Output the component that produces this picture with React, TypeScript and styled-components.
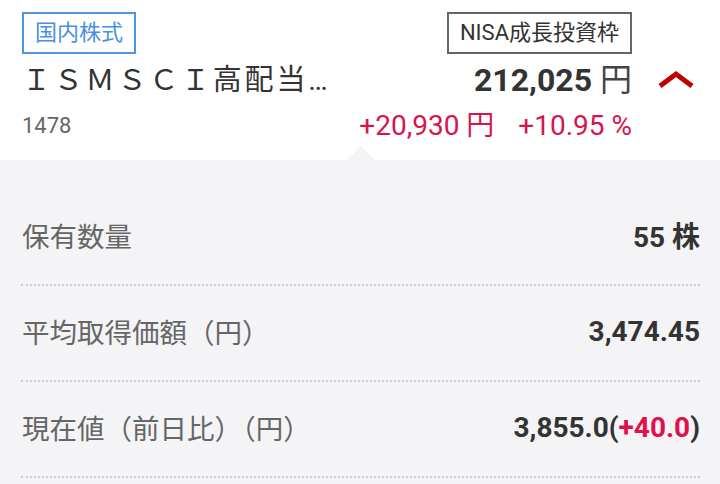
import React from "react";
import styled, { createGlobalStyle } from "styled-components";

const GlobalStyle = createGlobalStyle`
  html, body { margin: 0; padding: 0; background: #f4f4f6; }
  body { font-family: Roboto, "Noto Sans CJK JP", sans-serif; -webkit-font-smoothing: antialiased; }
`;

const Page = styled.div`
  min-height: 100vh;
  display: flex;
  flex-direction: column;
  overflow: hidden;
`;

const Header = styled.header`
  background: #ffffff;
  display: grid;
  grid-template-columns: 1fr auto 88px;
  grid-template-rows: 42px 52px 40px;
  padding: 12px 0 14px 22px;
`;

const Badge = styled.span<{ $tone: "blue" | "gray" }>`
  box-sizing: border-box;
  height: 42px;
  display: inline-flex;
  align-items: center;
  padding: 0 11px;
  border: 2px solid ${(p) => (p.$tone === "blue" ? "#4d95e3" : "#666666")};
  color: ${(p) => (p.$tone === "blue" ? "#4a90e0" : "#333333")};
  font-size: 22px;
  line-height: 38px;
  white-space: nowrap;
`;

const LeftCell = styled.div`
  display: flex;
  align-items: center;
  justify-content: flex-start;
  min-width: 0;
`;

const RightCell = styled.div`
  display: flex;
  align-items: center;
  justify-content: flex-end;
`;

const Title = styled.div`
  font-size: 29px;
  line-height: 52px;
  letter-spacing: 2.8px;
  color: #333333;
  white-space: nowrap;
  overflow: hidden;
`;

const Code = styled.div`
  font-size: 22px;
  line-height: 40px;
  color: #666666;
`;

const Price = styled.div`
  font-size: 32px;
  line-height: 52px;
  color: #333333;
  font-weight: 700;
  white-space: nowrap;
`;

const Unit = styled.span`
  font-weight: 400;
  color: #444444;
`;

const Change = styled.div`
  font-size: 28px;
  line-height: 40px;
  color: #d7144b;
  white-space: nowrap;
  display: flex;
  gap: 24px;
`;

const ChevronCell = styled.div`
  display: flex;
  align-items: center;
  justify-content: center;
  padding-bottom: 2px;
`;

const Body = styled.section`
  position: relative;
  flex: 1;
  background: #f4f4f6;
  padding: 30px 20px 0 21px;

  &::before {
    content: "";
    position: absolute;
    left: calc(50% - 13px);
    top: -14px;
    width: 0;
    height: 0;
    border-left: 14px solid transparent;
    border-right: 14px solid transparent;
    border-bottom: 14px solid #f4f4f6;
  }
`;

const Row = styled.div`
  box-sizing: border-box;
  height: 96px;
  display: flex;
  align-items: center;
  justify-content: space-between;
  padding-bottom: 4px;
  border-bottom: 2px dotted #cdcdcf;
`;

const Label = styled.div`
  font-size: 27.5px;
  color: #666666;
  padding-left: 1px;
`;

const Value = styled.div`
  font-size: 28px;
  font-weight: 700;
  color: #333333;
  white-space: nowrap;
`;

const Plus = styled.span`
  color: #e0114a;
`;

const Chevron = () => (
  <svg width="38" height="20" viewBox="0 0 38 20" aria-hidden="true">
    <polyline
      points="3,17 19,5 35,17"
      fill="none"
      stroke="#c00000"
      strokeWidth="5"
      strokeLinejoin="miter"
    />
  </svg>
);

const rows: { label: string; value: React.ReactNode }[] = [
  { label: "保有数量", value: "55 株" },
  { label: "平均取得価額（円）", value: "3,474.45" },
  {
    label: "現在値（前日比）（円）",
    value: (
      <>
        3,855.0(<Plus>+40.0</Plus>)
      </>
    ),
  },
];

export default function App() {
  return (
    <Page>
      <GlobalStyle />
      <Header>
        <LeftCell>
          <Badge $tone="blue">国内株式</Badge>
        </LeftCell>
        <RightCell>
          <Badge $tone="gray">NISA成長投資枠</Badge>
        </RightCell>
        <div />
        <LeftCell>
          <Title>ＩＳＭＳＣＩ高配当…</Title>
        </LeftCell>
        <RightCell>
          <Price>
            212,025 <Unit>円</Unit>
          </Price>
        </RightCell>
        <ChevronCell>
          <Chevron />
        </ChevronCell>
        <LeftCell>
          <Code>1478</Code>
        </LeftCell>
        <RightCell>
          <Change>
            <span>+20,930 円</span>
            <span>+10.95 %</span>
          </Change>
        </RightCell>
        <div />
      </Header>
      <Body>
        {rows.map((r) => (
          <Row key={r.label}>
            <Label>{r.label}</Label>
            <Value>{r.value}</Value>
          </Row>
        ))}
      </Body>
    </Page>
  );
}
